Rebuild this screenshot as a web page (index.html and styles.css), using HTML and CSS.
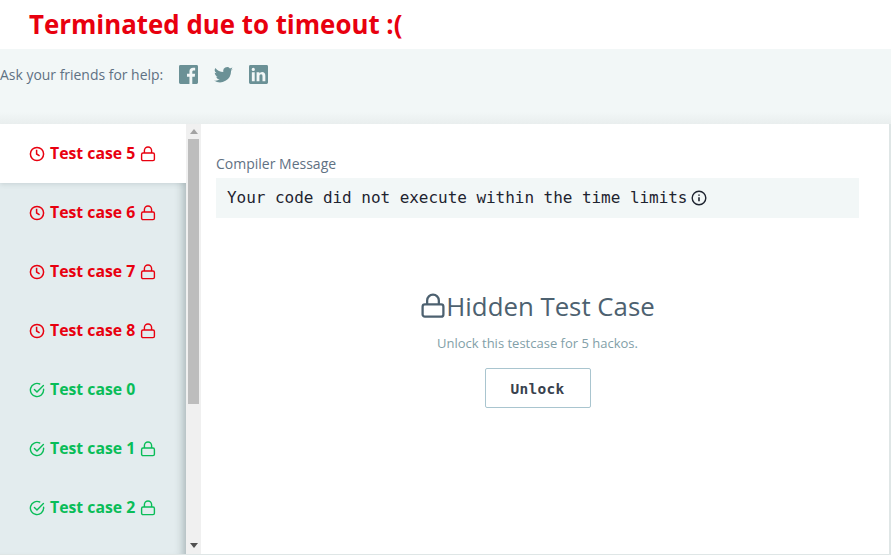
FILE: index.html

```html
<!DOCTYPE html>
<html lang="en">
<head>
    <meta charset="UTF-8">
    <title>Terminated due to timeout</title>
    <link rel="stylesheet" href="styles.css">
</head>
<body>
    <svg class="defs" width="0" height="0">
        <symbol id="clock" viewBox="0 0 16 16">
            <circle cx="8" cy="8" r="6.6" fill="none" stroke="currentColor" stroke-width="1.5"/>
            <path d="M7.6 3.8V8l3 1.8" fill="none" stroke="currentColor" stroke-width="1.5"/>
        </symbol>
        <symbol id="check" viewBox="0 0 16 16">
            <path d="M14.6 7.2V8A6.6 6.6 0 1 1 10.7 2" fill="none" stroke="currentColor" stroke-width="1.4" stroke-linecap="round"/>
            <path d="M5.4 7.4L8 10l6.4-6.6" fill="none" stroke="currentColor" stroke-width="1.4" stroke-linecap="round"/>
        </symbol>
        <symbol id="lock" viewBox="0 0 16 16">
            <rect x="1.6" y="7" width="12.8" height="7.6" rx="1.4" fill="none" stroke="currentColor" stroke-width="1.4"/>
            <path d="M4.4 7V4.6a3.6 3.6 0 0 1 7.2 0V7" fill="none" stroke="currentColor" stroke-width="1.4"/>
        </symbol>
    </svg>

    <header class="status">
        <h1 class="status-title">Terminated due to timeout :(</h1>
    </header>

    <div class="share">
        <span class="share-label">Ask your friends for help:</span>
        <svg class="share-icon" viewBox="0 0 20 20">
            <path d="M1.5 0h17A1.5 1.5 0 0 1 20 1.500v17a1.500 1.500 0 0 1-1.500 1.500H14v-7.700h2.600l.4-3H14V7.200c0-.9.300-1.500 1.500-1.500H17V3c-.3 0-1.200-.1-2.200-.1-2.300 0-3.800 1.400-3.800 3.900v2.500H8.400v3H11V20H1.500A1.500 1.500 0 0 1 0 18.500v-17A1.500 1.500 0 0 1 1.500 0z"/>
        </svg>
        <svg class="share-icon" viewBox="0 0 20 20">
            <path d="M20 4.300c-.7.300-1.500.6-2.400.7.900-.500 1.500-1.300 1.800-2.300-.8.500-1.700.8-2.600 1A4 4 0 0 0 9.900 7.400 11.600 11.600 0 0 1 1.400 3.100a4.100 4.100 0 0 0 1.300 5.500c-.7 0-1.300-.2-1.900-.5 0 2 1.400 3.700 3.300 4.100-.6.200-1.200.2-1.800.1.500 1.600 2 2.800 3.800 2.800A8.200 8.200 0 0 1 0 16.300a11.600 11.600 0 0 0 17.900-10.300c.8-.5 1.500-1.100 2.100-1.700z"/>
        </svg>
        <svg class="share-icon" viewBox="0 0 20 20">
            <path fill-rule="evenodd" d="M1.500 0h17A1.500 1.500 0 0 1 20 1.500v17a1.500 1.500 0 0 1-1.500 1.500h-17A1.500 1.500 0 0 1 0 18.500v-17A1.500 1.500 0 0 1 1.500 0zM3 7.600V17h3V7.600zM4.500 3a1.700 1.700 0 1 0 0 3.400 1.700 1.700 0 0 0 0-3.400zM8 7.600V17h3v-5c0-1.300.5-2.200 1.700-2.200 1.100 0 1.500.8 1.500 2.200v5h3v-5.600c0-2.700-1.300-4-3.300-4-1.500 0-2.400.8-2.900 1.600V7.600z"/>
        </svg>
    </div>

    <main class="results">
        <aside class="cases">
            <ul class="case-list">
                <li class="case case-active failed">
                    <svg class="case-icon"><use href="#clock"/></svg>
                    <span>Test case 5</span>
                    <svg class="case-icon"><use href="#lock"/></svg>
                </li>
                <li class="case failed">
                    <svg class="case-icon"><use href="#clock"/></svg>
                    <span>Test case 6</span>
                    <svg class="case-icon"><use href="#lock"/></svg>
                </li>
                <li class="case failed">
                    <svg class="case-icon"><use href="#clock"/></svg>
                    <span>Test case 7</span>
                    <svg class="case-icon"><use href="#lock"/></svg>
                </li>
                <li class="case failed">
                    <svg class="case-icon"><use href="#clock"/></svg>
                    <span>Test case 8</span>
                    <svg class="case-icon"><use href="#lock"/></svg>
                </li>
                <li class="case passed">
                    <svg class="case-icon"><use href="#check"/></svg>
                    <span>Test case 0</span>
                </li>
                <li class="case passed">
                    <svg class="case-icon"><use href="#check"/></svg>
                    <span>Test case 1</span>
                    <svg class="case-icon"><use href="#lock"/></svg>
                </li>
                <li class="case passed">
                    <svg class="case-icon"><use href="#check"/></svg>
                    <span>Test case 2</span>
                    <svg class="case-icon"><use href="#lock"/></svg>
                </li>
            </ul>
            <div class="scrollbar">
                <span class="arrow-up"></span>
                <span class="thumb"></span>
                <span class="arrow-down"></span>
            </div>
        </aside>

        <section class="detail">
            <div class="message-label">Compiler Message</div>
            <div class="message">
                <span class="message-text">Your code did not execute within the time limits</span>
                <svg class="info" viewBox="0 0 16 16">
                    <circle cx="8" cy="8" r="6.800" fill="none" stroke="currentColor" stroke-width="1.400"/>
                    <path d="M8 7.200v4M8 4.400v1.300" fill="none" stroke="currentColor" stroke-width="1.600"/>
                </svg>
            </div>
            <div class="hidden-case">
                <h2 class="hidden-title">
                    <svg class="hidden-lock"><use href="#lock"/></svg>Hidden Test Case
                </h2>
                <p class="hidden-text">Unlock this testcase for 5 hackos.</p>
                <button class="unlock">Unlock</button>
            </div>
        </section>
    </main>
</body>
</html>
```

FILE: styles.css

```css
* {
    box-sizing: border-box;
}

html, body {
    height: 100%;
}

body {
    margin: 0;
    display: flex;
    flex-direction: column;
    overflow: hidden;
    background: #f2f7f7;
    font-family: "Open Sans", sans-serif;
}

.defs {
    position: absolute;
}

.status {
    height: 49px;
    flex: none;
    padding-left: 29px;
    background: #fff;
}

.status-title {
    margin: 0;
    font-size: 25.850px;
    line-height: 48px;
    font-weight: 700;
    color: #e8000f;
}

.share {
    height: 75px;
    flex: none;
    display: flex;
    align-items: flex-start;
    padding-top: 16px;
    background: linear-gradient(to bottom, #f2f7f7 84%, #e9eeee 100%);
}

.share-label {
    width: 178.500px;
    font-size: 13.950px;
    line-height: 20px;
    color: #5f7183;
}

.share-icon {
    width: 19px;
    height: 19px;
    margin-right: 16px;
    fill: #6b9196;
}

.results {
    flex: 1;
    min-height: 0;
    display: flex;
    padding-right: 2px;
    padding-bottom: 1px;
    background: #dfe6e6;
}

.cases {
    width: 201px;
    flex: none;
    display: flex;
    background: #e3ecee;
}

.case-list {
    width: 186px;
    flex: none;
    margin: 0;
    padding: 0;
    list-style: none;
    overflow: hidden;
    box-shadow: inset -10px 0 10px -8px rgba(80, 100, 105, 0.45);
}

.case {
    height: 59px;
    display: flex;
    align-items: center;
    gap: 5px;
    padding: 0 0 2px 29px;
    font-size: 15.800px;
    font-weight: 700;
}

.case-active {
    background: #fff;
    box-shadow: 0 1px 5px rgba(80, 100, 105, 0.2);
}

.failed {
    color: #e8000f;
}

.passed {
    color: #09bd58;
}

.case-icon {
    width: 16px;
    height: 16px;
    flex: none;
    margin-top: 3px;
}

.scrollbar {
    width: 15px;
    flex: none;
    display: flex;
    flex-direction: column;
    align-items: center;
    background: #f0f0f0;
}

.arrow-up {
    margin-top: 5px;
    border-left: 4px solid transparent;
    border-right: 4px solid transparent;
    border-bottom: 5px solid #a3a3a3;
}

.thumb {
    width: 11px;
    height: 265px;
    margin-top: 5px;
    background: #bdbdbd;
}

.arrow-down {
    margin-top: auto;
    margin-bottom: 6px;
    border-left: 4px solid transparent;
    border-right: 4px solid transparent;
    border-top: 5px solid #505050;
}

.detail {
    flex: 1;
    min-width: 0;
    padding: 30px 30px 0 15px;
    background: #fff;
}

.message-label {
    font-size: 14px;
    line-height: 20px;
    color: #5f7183;
}

.message {
    height: 40px;
    margin-top: 4px;
    display: flex;
    align-items: center;
    gap: 4px;
    padding-left: 11px;
    background: #f2f7f7;
    font-family: "DejaVu Sans Mono", monospace;
    font-size: 16px;
    letter-spacing: -0.040px;
    color: #1e2430;
}

.message-text {
    margin-bottom: 2px;
}

.info {
    width: 16px;
    height: 16px;
}

.hidden-case {
    display: flex;
    flex-direction: column;
    align-items: center;
    padding-top: 71px;
}

.hidden-title {
    margin: 0;
    display: flex;
    align-items: center;
    font-size: 25.800px;
    line-height: 34px;
    font-weight: 400;
    color: #4d6170;
}

.hidden-lock {
    width: 26px;
    height: 26px;
    color: #4d6170;
}

.hidden-text {
    margin: 10px 0 0;
    font-size: 13px;
    line-height: 20px;
    color: #82a0a8;
}

.unlock {
    width: 106px;
    height: 40px;
    margin-top: 15px;
    padding-top: 3px;
    background: #fff;
    border: 1px solid #a9c5cf;
    border-radius: 2px;
    font-family: "DejaVu Sans Mono", monospace;
    font-size: 14.500px;
    letter-spacing: 0.300px;
    font-weight: 700;
    color: #39424e;
}
```
